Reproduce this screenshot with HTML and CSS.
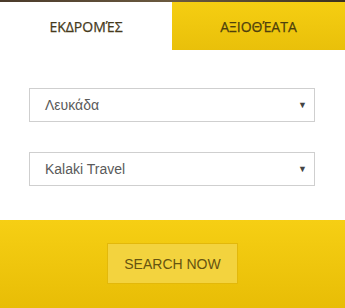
FILE: index.html
```html
<!DOCTYPE html>
<html>
<head>
<meta charset="utf-8">
<link rel="stylesheet" href="styles.css">
</head>
<body>
<div class="widget">
  <div class="topline"></div>
  <div class="tabs">
    <div class="tab active">ΕΚΔΡΟΜΈΣ</div>
    <div class="tab">ΑΞΙΟΘΈΑΤΑ</div>
  </div>
  <div class="form">
    <div class="select"><span>Λευκάδα</span><span class="arrow">▼</span></div>
    <div class="select"><span>Kalaki Travel</span><span class="arrow">▼</span></div>
  </div>
  <div class="footer">
    <div class="btn">SEARCH NOW</div>
  </div>
</div>
</body>
</html>
```
FILE: styles.css
```css
html, body { margin: 0; padding: 0; background: #fff; }
.widget { width: 345px; height: 308px; display: flex; flex-direction: column; overflow: hidden; }
.topline { height: 2px; background: linear-gradient(to right, #4a3a2a, #6b5a40 50%, #3a3020); }
.tabs { display: flex; height: 48px; }
.tab {
  flex: 0 0 173px; display: flex; align-items: center; justify-content: center;
  font-family: "Open Sans", sans-serif; font-size: 14px; color: #4e3f0c;
  -webkit-text-stroke: 0.25px currentColor;
  background: linear-gradient(to bottom, #f5ce12, #e9c00a);
}
.tab.active { flex: 0 0 172px; background: #fff; color: #463a1c; }
.form { flex: 1; display: flex; flex-direction: column; gap: 30px; padding: 38px 30px 0 29px; }
.select {
  height: 32px; border: 1px solid #cfcfcf; display: flex; align-items: center;
  justify-content: space-between; padding: 0 7px 0 15px;
  font-family: "Liberation Sans", Arial, sans-serif; font-size: 14px; color: #5a5a5a;
}
.arrow { font-size: 9px; color: #444; }
.footer {
  height: 88px; display: flex; justify-content: center; align-items: flex-start;
  background: linear-gradient(to bottom, #f6cf14, #e8bd06);
}
.btn {
  margin-top: 23px; width: 129px; height: 39px; border: 1px solid #e3b80a;
  background: #f3d33e; display: flex; align-items: center; justify-content: center;
  font-family: "Liberation Sans", Arial, sans-serif; font-size: 14px; color: #665410;
}
```
